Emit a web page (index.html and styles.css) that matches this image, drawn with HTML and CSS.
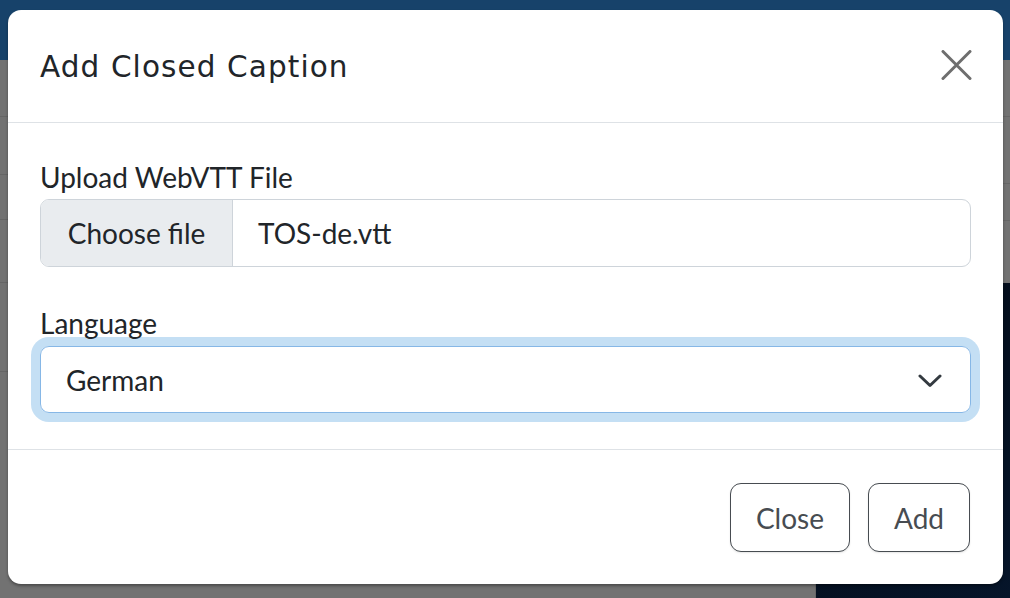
FILE: index.html
```html
<!DOCTYPE html>
<html lang="en">
<head>
<meta charset="utf-8">
<title>Add Closed Caption</title>
<link rel="stylesheet" href="styles.css">
</head>
<body>
<div class="page">
  <div class="topbar"></div>
  <div class="content">
    <div class="main">
      <div class="row r1"></div>
      <div class="row r2"></div>
      <div class="row r3"></div>
      <div class="row r4"></div>
      <div class="row r5"></div>
      <div class="row r6"></div>
    </div>
    <div class="side">
      <div class="side-top">
        <div class="row s1"></div>
        <div class="row s2"></div>
        <div class="row s3"></div>
      </div>
      <div class="player"></div>
    </div>
  </div>
</div>

<div class="modal">
  <div class="modal-header">
    <h1 class="modal-title">Add Closed Caption</h1>
    <button class="btn-close" aria-label="Close">
      <svg width="31" height="30" viewBox="0 0 31 30"><path d="M2 1.5 L29 28.5 M29 1.5 L2 28.5" stroke="#6e6e6e" stroke-width="3" stroke-linecap="round" fill="none"/></svg>
    </button>
  </div>
  <div class="modal-body">
    <label class="form-label">Upload WebVTT File</label>
    <div class="file-input">
      <span class="file-btn">Choose file</span>
      <span class="file-name">TOS-de.vtt</span>
    </div>
    <label class="form-label lang">Language</label>
    <div class="select">
      <span>German</span>
      <svg width="24" height="14" viewBox="0 0 24 14"><path d="M2 2 L12 11.5 L22 2" stroke="#343a40" stroke-width="3" fill="none" stroke-linecap="round" stroke-linejoin="round"/></svg>
    </div>
  </div>
  <div class="modal-footer">
    <button class="btn">Close</button>
    <button class="btn">Add</button>
  </div>
</div>
</body>
</html>
```

FILE: styles.css
```css
html, body {
  margin: 0;
  padding: 0;
}
body {
  width: 1010px;
  height: 598px;
  overflow: hidden;
  background: #727272;
  font-family: Lato, "Liberation Sans", sans-serif;
}
.page {
  display: flex;
  flex-direction: column;
  height: 598px;
}
.topbar {
  height: 60px;
  background: #17426a;
  flex: none;
}
.content {
  flex: 1;
  display: grid;
  grid-template-columns: 816px 1fr;
}
.main {
  display: flex;
  flex-direction: column;
  border-right: 1px solid #666;
}
.row {
  border-bottom: 1.5px solid #666;
  flex: none;
}
.r1 { height: 56px; }
.r2 { height: 57px; }
.r3 { height: 44px; }
.r4 { height: 62px; }
.r5 { height: 88px; }
.r6 { height: 100px; border-bottom: none; }
.side {
  display: flex;
  flex-direction: column;
}
.side-top {
  height: 223px;
  display: flex;
  flex-direction: column;
}
.s1 { height: 56px; }
.s2 { height: 66px; }
.s3 { height: 36px; }
.player {
  flex: 1;
  background: linear-gradient(135deg, #020a14, #06152a);
}

.modal {
  position: absolute;
  left: 8px;
  top: 10px;
  width: 995px;
  height: 574px;
  background: #fff;
  border-radius: 13px;
  box-shadow: 0 2px 3px rgba(0,0,0,0.35);
  display: flex;
  flex-direction: column;
  color: #212529;
}
.modal-header {
  height: 113px;
  border-bottom: 1.5px solid #dee2e6;
  display: flex;
  align-items: center;
  justify-content: space-between;
  padding: 0 31px 0 32px;
  box-sizing: border-box;
  flex: none;
}
.modal-title {
  margin: 0;
  font-family: "DejaVu Sans", "Noto Sans", sans-serif;
  font-weight: 400;
  font-size: 29.5px;
  letter-spacing: 1.1px;
  color: #212529;
  margin-top: 1px;
}
.btn-close {
  background: none;
  border: none;
  padding: 0;
  width: 31px;
  height: 30px;
  display: flex;
  margin-top: -2px;
}
.modal-body {
  padding: 33px 32px 0 32px;
  height: 327px;
  box-sizing: border-box;
  border-bottom: 1.5px solid #dee2e6;
  flex: none;
}
.form-label {
  display: block;
  font-size: 28px;
  line-height: 42px;
  margin-bottom: 1px;
}
.form-label.lang {
  margin-top: 35px;
  margin-bottom: 2px;
}
.file-input {
  display: flex;
  height: 68px;
  border: 1.5px solid #ced4da;
  border-radius: 9px;
  box-sizing: border-box;
  overflow: hidden;
  font-size: 28px;
}
.file-btn {
  width: 192px;
  background: #e9ecef;
  border-right: 1.5px solid #ced4da;
  display: flex;
  align-items: center;
  justify-content: center;
  box-sizing: border-box;
}
.file-name {
  display: flex;
  align-items: center;
  padding-left: 25px;
}
.select {
  height: 67px;
  border: 1.5px solid #86b7e6;
  border-radius: 9px;
  box-sizing: border-box;
  box-shadow: 0 0 0 9px #c4dff4;
  display: flex;
  align-items: center;
  justify-content: space-between;
  padding: 0 28px 0 25px;
  font-size: 28px;
}
.select svg { margin-top: 2px; }
.modal-footer {
  flex: 1;
  display: flex;
  justify-content: flex-end;
  align-items: flex-start;
  gap: 18px;
  padding: 33px 33px 0 0;
}
.btn {
  height: 69px;
  padding: 0 25px;
  background: #fff;
  border: 1.5px solid #474c51;
  border-radius: 11px;
  font-family: Lato, "Liberation Sans", sans-serif;
  font-size: 28px;
  color: #474c51;
  box-shadow: 0 1px 2px rgba(0,0,0,0.1);
}
```
